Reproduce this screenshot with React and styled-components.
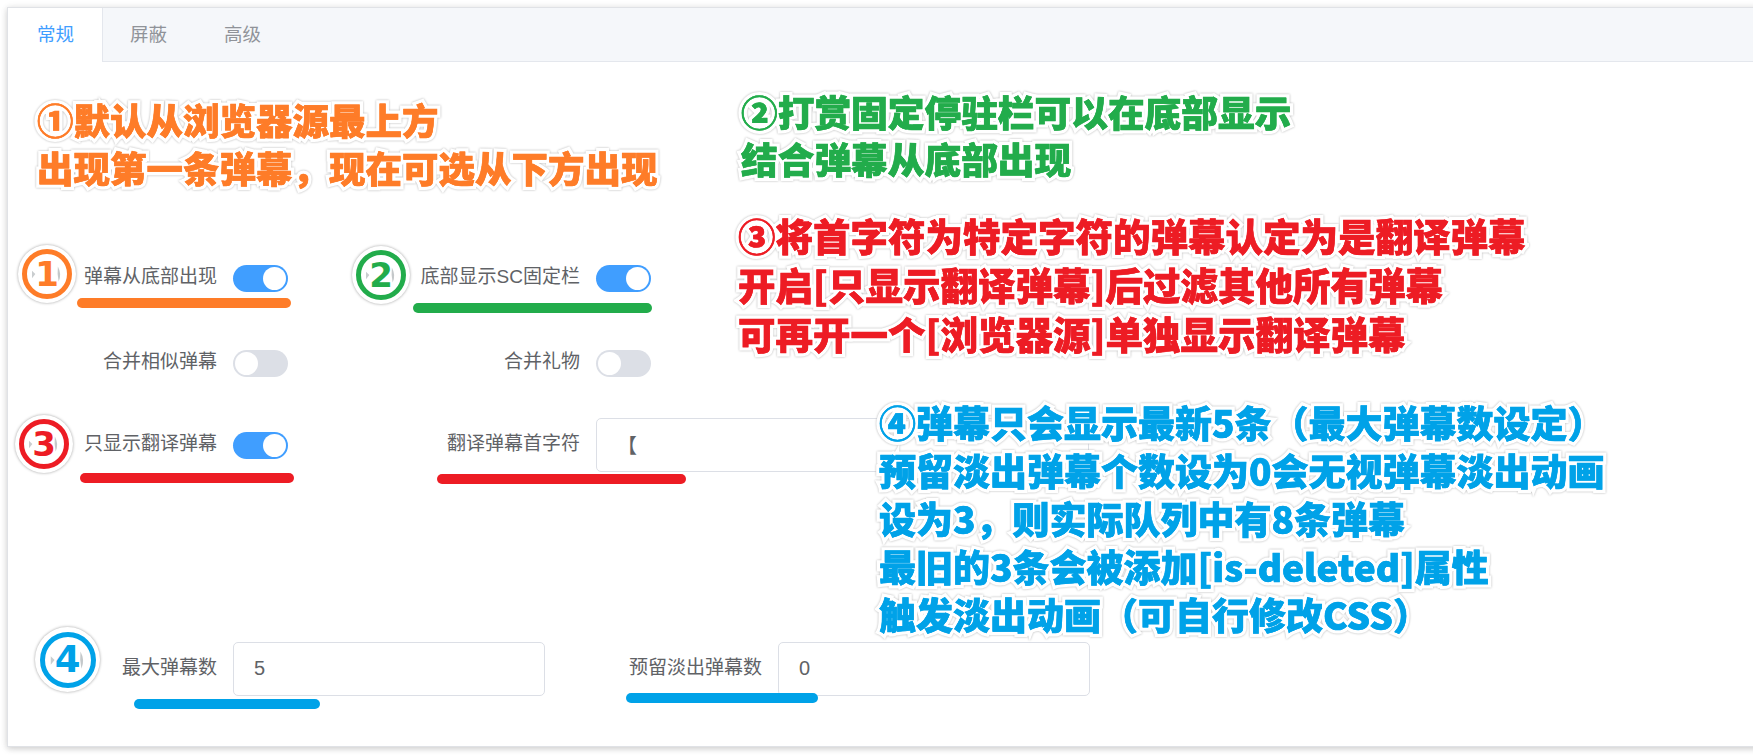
import React from "react";
import styled, { createGlobalStyle } from "styled-components";

const Global = createGlobalStyle`
  html, body { margin: 0; padding: 0; background: #fff; overflow: hidden; }
  * { box-sizing: border-box; }
`;

const UI_FONT = `"Liberation Sans", "Noto Sans CJK SC", sans-serif`;

const Page = styled.div`
  position: relative;
  width: 1753px;
  height: 756px;
  overflow: hidden;
  padding: 7px 0 0 7px;
  font-family: ${UI_FONT};
`;

const Card = styled.div`
  width: 1790px;
  border: 1px solid #e0e2e6;
  background: #fff;
  box-shadow: 0 2px 6px rgba(0, 0, 0, 0.16), 0 0 8px rgba(0, 0, 0, 0.06);
`;

const TabBar = styled.div`
  display: flex;
  height: 54px;
  background: #f5f7fa;
  border-bottom: 1px solid #e4e7ed;
`;

const Tab = styled.div`
  height: 54px;
  padding: 0 28px;
  line-height: 54px;
  font-size: 18.5px;
  color: ${(p) => (p.$active ? "#409eff" : "#909399")};
  background: ${(p) => (p.$active ? "#fff" : "transparent")};
  border-right: 1px solid ${(p) => (p.$active ? "#e4e7ed" : "transparent")};
  border-bottom: 1px solid ${(p) => (p.$active ? "#fff" : "#e4e7ed")};

  &:first-child {
    padding: 0 28px 0 29px;
    margin-right: -1px;
  }
`;

const FormBody = styled.div`
  padding: 189px 0 50px 25px;
`;

const Row = styled.div`
  display: grid;
  grid-template-columns: ${(p) => p.$cols};
  column-gap: ${(p) => p.$gap || 0}px;
  margin-bottom: ${(p) => p.$after}px;
`;

const Field = styled.div`
  display: flex;
  align-items: center;
  height: 54px;
`;

const Label = styled.label`
  flex: 0 0 200px;
  padding-right: 16px;
  text-align: right;
  font-size: 19px;
  line-height: 27px;
  color: #606266;
  margin-top: -3px;
`;

const Switch = styled.span`
  position: relative;
  display: block;
  width: 55px;
  height: 27px;
  border-radius: 14px;
  background: ${(p) => (p.$on ? "#409eff" : "#dcdfe6")};

  &::after {
    content: "";
    position: absolute;
    top: 2px;
    left: ${(p) => (p.$on ? "30px" : "2px")};
    width: 23px;
    height: 23px;
    border-radius: 50%;
    background: #fff;
  }
`;

const Input = styled.input`
  width: ${(p) => p.$w}px;
  height: 54px;
  padding: 0 20px 2px;
  border: 1px solid #dcdfe6;
  border-radius: 5px;
  background: #fff;
  outline: none;
  font-family: ${UI_FONT};
  font-size: 20px;
  color: #606266;
`;

const Note = styled.div`
  position: absolute;
  left: ${(p) => p.$x}px;
  top: ${(p) => p.$y}px;
  white-space: nowrap;
  font-family: "Noto Sans CJK SC", sans-serif;
  font-weight: 900;
  font-size: ${(p) => p.$size || 37}px;
  line-height: ${(p) => p.$lh || 47.5}px;
  color: ${(p) => p.$color};
  filter: drop-shadow(0 0 1px #b5b5b5);
`;

const NoteLine = styled.div`
  position: relative;
  -webkit-text-stroke: 7px #fff;
  paint-order: stroke fill;

  &::after {
    content: attr(data-text);
    position: absolute;
    left: 0;
    top: 0;
    -webkit-text-stroke: 0.6px currentColor;
  }
`;

const Underline = styled.div`
  position: absolute;
  left: ${(p) => p.$x}px;
  top: ${(p) => p.$y}px;
  width: ${(p) => p.$w}px;
  height: 10px;
  border-radius: 5px;
  background: ${(p) => p.$color};
`;

const Badge = styled.div`
  position: absolute;
  left: ${(p) => p.$x}px;
  top: ${(p) => p.$y}px;
  width: ${(p) => p.$size}px;
  height: ${(p) => p.$size}px;
  border-radius: 50%;
  background: #fff;
  box-shadow: 0 0 3px rgba(0, 0, 0, 0.38);
  display: flex;
  align-items: center;
  justify-content: center;
`;

const BadgeRing = styled.div`
  position: relative;
  width: ${(p) => p.$size}px;
  height: ${(p) => p.$size}px;
  border-radius: 50%;
  border: ${(p) => p.$line}px solid ${(p) => p.$color};
  display: flex;
  align-items: center;
  justify-content: center;
  font-family: "DejaVu Sans", sans-serif;
  font-weight: 700;
  font-size: ${(p) => p.$font}px;
  line-height: 1;
  color: ${(p) => p.$color};
`;

const Smudge = styled.svg`
  position: absolute;
  inset: 0;
  width: 100%;
  height: 100%;
`;

const BadgeArt = () => (
  <Smudge viewBox="0 0 48 48">
    <path d="M6 20 L10 24 L6 29 Z" fill="#c9cdcf" />
    <path d="M37 15 Q42 24 38 33 Q36 24 37 15 Z" fill="#c4c8ca" />
  </Smudge>
);

const ORANGE = "#fe7c28";
const GREEN = "#22ac4b";
const RED = "#ed1c24";
const BLUE = "#00a2e8";

const NOTES = [
  {
    x: 37, y: 96, size: 36.5, lh: 47.5, color: ORANGE,
    lines: ["\u2460默认从浏览器源最上方", "出现第一条弹幕\uFF0C现在可选从下方出现"],
  },
  {
    x: 741, y: 88, size: 36.7, lh: 47, color: GREEN,
    lines: ["\u2461打赏固定停驻栏可以在底部显示", "结合弹幕从底部出现"],
  },
  {
    x: 738, y: 210, size: 37.5, lh: 49, color: RED,
    lines: [
      "\u2462将首字符为特定字符的弹幕认定为是翻译弹幕",
      "开启[只显示翻译弹幕]后过滤其他所有弹幕",
      "可再开一个[浏览器源]单独显示翻译弹幕",
    ],
  },
  {
    x: 879, y: 398, size: 37, lh: 48, color: BLUE,
    lines: [
      "\u2463弹幕只会显示最新5条\uFF08最大弹幕数设定\uFF09",
      "预留淡出弹幕个数设为0会无视弹幕淡出动画",
      "设为3\uFF0C则实际队列中有8条弹幕",
      "最旧的3条会被添加[is-deleted]属性",
      "触发淡出动画\uFF08可自行修改CSS\uFF09",
    ],
  },
];

export default function App() {
  return (
    <Page>
      <Global />
      <Card>
        <TabBar>
          <Tab $active>常规</Tab>
          <Tab>屏蔽</Tab>
          <Tab>高级</Tab>
        </TabBar>
        <FormBody>
          <Row $cols="363px 1fr" $after={31}>
            <Field>
              <Label>弹幕从底部出现</Label>
              <Switch $on />
            </Field>
            <Field>
              <Label>底部显示SC固定栏</Label>
              <Switch $on />
            </Field>
          </Row>
          <Row $cols="363px 1fr" $after={28}>
            <Field>
              <Label>合并相似弹幕</Label>
              <Switch />
            </Field>
            <Field>
              <Label>合并礼物</Label>
              <Switch />
            </Field>
          </Row>
          <Row $cols="363px 1fr" $after={170}>
            <Field>
              <Label>只显示翻译弹幕</Label>
              <Switch $on />
            </Field>
            <Field>
              <Label>翻译弹幕首字符</Label>
              <Input $w={493} readOnly value="【" />
            </Field>
          </Row>
          <Row $cols="512px 1fr" $gap={33} $after={0}>
            <Field>
              <Label>最大弹幕数</Label>
              <Input $w={313} readOnly value="5" />
            </Field>
            <Field>
              <Label>预留淡出弹幕数</Label>
              <Input $w={312} readOnly value="0" />
            </Field>
          </Row>
        </FormBody>
      </Card>

      <Underline $x={77} $y={298} $w={214} $color={ORANGE} />
      <Underline $x={413} $y={303} $w={239} $color={GREEN} />
      <Underline $x={80} $y={473} $w={214} $color={RED} />
      <Underline $x={437} $y={474} $w={249} $color={RED} />
      <Underline $x={134} $y={699} $w={186} $color={BLUE} />
      <Underline $x={626} $y={693} $w={192} $color={BLUE} />

      <Badge $x={18} $y={245} $size={58}>
        <BadgeRing $size={50} $line={5} $font={34} $color={ORANGE}>1<BadgeArt /></BadgeRing>
      </Badge>
      <Badge $x={352} $y={246} $size={58}>
        <BadgeRing $size={50} $line={5} $font={34} $color={GREEN}>2<BadgeArt /></BadgeRing>
      </Badge>
      <Badge $x={15} $y={415} $size={58}>
        <BadgeRing $size={50} $line={5} $font={34} $color={RED}>3<BadgeArt /></BadgeRing>
      </Badge>
      <Badge $x={35} $y={627} $size={65}>
        <BadgeRing $size={56} $line={5} $font={37} $color={BLUE}>4<BadgeArt /></BadgeRing>
      </Badge>

      {NOTES.map((n) => (
        <Note key={n.color} $x={n.x} $y={n.y} $size={n.size} $lh={n.lh} $color={n.color}>
          {n.lines.map((line) => (
            <NoteLine key={line} data-text={line}>{line}</NoteLine>
          ))}
        </Note>
      ))}
    </Page>
  );
}
